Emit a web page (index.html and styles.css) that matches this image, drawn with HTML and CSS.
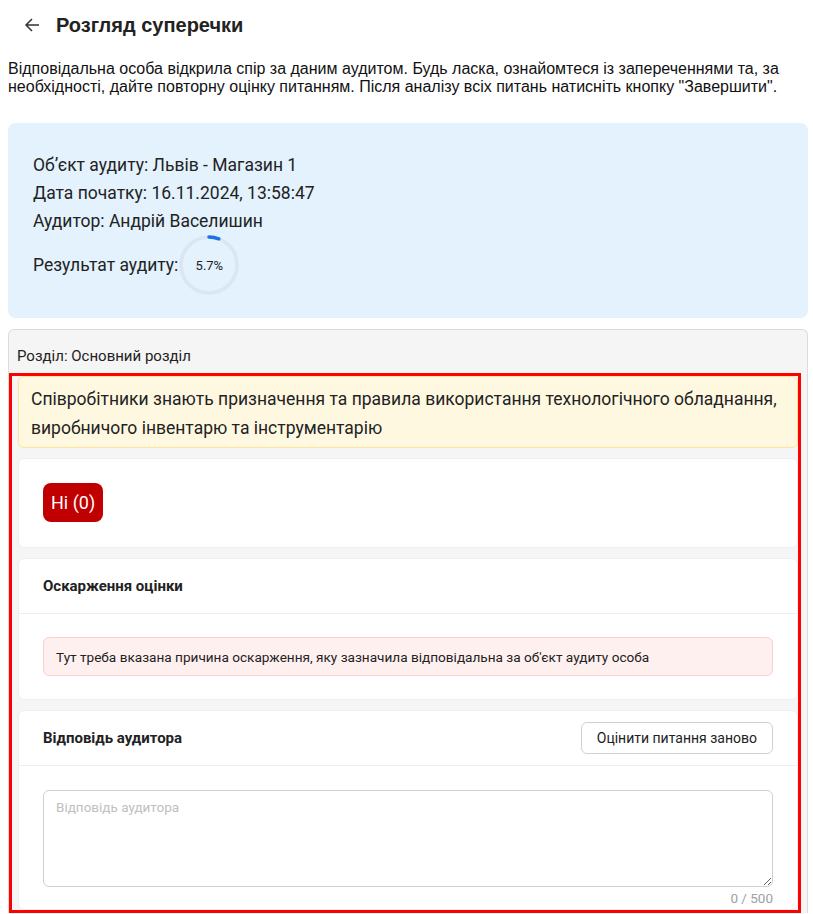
FILE: index.html
```html
<!DOCTYPE html>
<html lang="uk">
<head>
<meta charset="utf-8">
<title>Розгляд суперечки</title>
<link rel="stylesheet" href="styles.css">
</head>
<body>
<div class="page">
  <header class="top">
    <button class="back" aria-label="Назад">
      <svg width="16" height="16" viewBox="0 0 16 16"><path d="M15 8H2M8 2L2 8l6 6" fill="none" stroke="#333" stroke-width="1.5"/></svg>
    </button>
    <h1 class="title">Розгляд суперечки</h1>
  </header>
  <p class="intro">Відповідальна особа відкрила спір за даним аудитом. Будь ласка, ознайомтеся із запереченнями та, за необхідності, дайте повторну оцінку питанням. Після аналізу всіх питань натисніть кнопку "Завершити".</p>

  <section class="info">
    <div class="info-line">Об’єкт аудиту: Львів - Магазин 1</div>
    <div class="info-line">Дата початку: 16.11.2024, 13:58:47</div>
    <div class="info-line">Аудитор: Андрій Васелишин</div>
    <div class="result">
      <span>Результат аудиту:</span>
      <div class="ring">
        <svg width="60" height="60" viewBox="0 0 60 60">
          <circle cx="30" cy="30" r="28" fill="none" stroke="#dae6f1" stroke-width="3.5"/>
          <circle class="arc" cx="30" cy="30" r="28" fill="none" stroke="#1a73e8" stroke-width="3.5" stroke-linecap="round" stroke-dasharray="10.03 175.93" transform="rotate(-90 30 30)"/>
        </svg>
        <span class="ring-label">5.7%</span>
      </div>
    </div>
  </section>

  <section class="chapter">
    <div class="chapter-head">Розділ: Основний розділ</div>
    <div class="highlight">
      <div class="question">Співробітники знають призначення та правила використання технологічного обладнання, виробничого інвентарю та інструментарію</div>

      <div class="card card-answer">
        <span class="answer-no">Ні (0)</span>
      </div>

      <div class="card">
        <div class="card-head"><span class="card-title">Оскарження оцінки</span></div>
        <div class="card-body">
          <div class="appeal">Тут треба вказана причина оскарження, яку зазначила відповідальна за об'єкт аудиту особа</div>
        </div>
      </div>

      <div class="card">
        <div class="card-head">
          <span class="card-title">Відповідь аудитора</span>
          <button class="btn-outline">Оцінити питання заново</button>
        </div>
        <div class="card-body card-body-reply">
          <textarea class="reply" placeholder="Відповідь аудитора"></textarea>
          <div class="counter">0 / 500</div>
        </div>
      </div>
    </div>
  </section>
</div>
</body>
</html>
```

FILE: styles.css
```css
* { box-sizing: border-box; }
html, body { margin: 0; padding: 0; background: #fff; }
body { font-family: "Liberation Sans", Arial, sans-serif; color: #222; overflow: hidden; }
.page { padding: 0 5px 0 8px; }

.top { display: flex; align-items: center; height: 50px; padding-left: 16px; }
.back { width: 16px; height: 32px; border: 0; background: none; padding: 0; display: flex; align-items: center; justify-content: center; margin-right: 16px; }
.title { margin: 0; font-size: 20px; font-weight: bold; color: #222; }

.intro { margin: 10px 0 0; font-size: 16px; line-height: 18px; color: #111; }

.info { margin-top: 27px; background: #e3f2fd; border-radius: 8px; padding: 28px 25px 23px; font-family: Roboto, "Noto Sans", sans-serif; font-size: 17.5px; color: #222; }
.info-line { line-height: 28px; }
.result { display: flex; align-items: center; gap: 1px; }
.ring { position: relative; width: 60px; height: 60px; }
.ring svg { display: block; }
.ring-label { position: absolute; inset: 0; display: flex; align-items: center; justify-content: center; font-size: 13px; }

.chapter { margin-top: 11px; background: #f5f5f5; border: 1px solid #dcdcdc; border-bottom: 0; border-radius: 6px 6px 0 0; font-family: Roboto, "Noto Sans", sans-serif; }
.chapter-head { padding: 15px 8px 6px; font-size: 15px; line-height: 22px; color: #222; }
.highlight { margin-right: 6px; border: 3px solid #f00; padding: 0 0 0 6px; display: flex; flex-direction: column; gap: 10px; }

.question { background: #fff8e1; border: 1px solid #ffe39a; border-radius: 6px; padding: 8px 10px 4px 12px; font-size: 17.5px; line-height: 29px; color: #222; }

.card { background: #fff; border: 1px solid #efefef; border-radius: 6px; }
.card-answer { padding: 24px 24px 25px; }
.answer-no { display: inline-block; background: #c00000; color: #fff; font-size: 18px; line-height: 39px; height: 39px; padding: 0 8px; border-radius: 8px; }

.card-head { display: flex; align-items: center; justify-content: space-between; height: 55px; padding: 0 24px; border-bottom: 1px solid #eee; }
.card-title { font-size: 15px; font-weight: bold; color: #222; }
.card-body { padding: 23px 24px 23px; }
.appeal { background: #fff0f0; border: 1px solid #ffcfcf; border-radius: 6px; padding: 0 12px; height: 39px; display: flex; align-items: center; font-size: 13.6px; color: #222; }

.btn-outline { font-family: Roboto, "Noto Sans", sans-serif; font-size: 14px; color: #222; background: #fff; border: 1px solid #d0d0d0; border-radius: 6px; height: 32px; padding: 0 15px; }

.card-body-reply { padding-top: 24px; padding-bottom: 2px; }
.reply { display: block; width: 100%; height: 97px; border: 1px solid #d0d0d0; border-radius: 6px; padding: 8px 12px; font-family: Roboto, "Noto Sans", sans-serif; font-size: 13.5px; resize: vertical; }
.reply::placeholder { color: #c0c0c0; }
.counter { text-align: right; font-size: 13.5px; color: #a0a0a0; margin-top: 2px; line-height: 18px; }
```
